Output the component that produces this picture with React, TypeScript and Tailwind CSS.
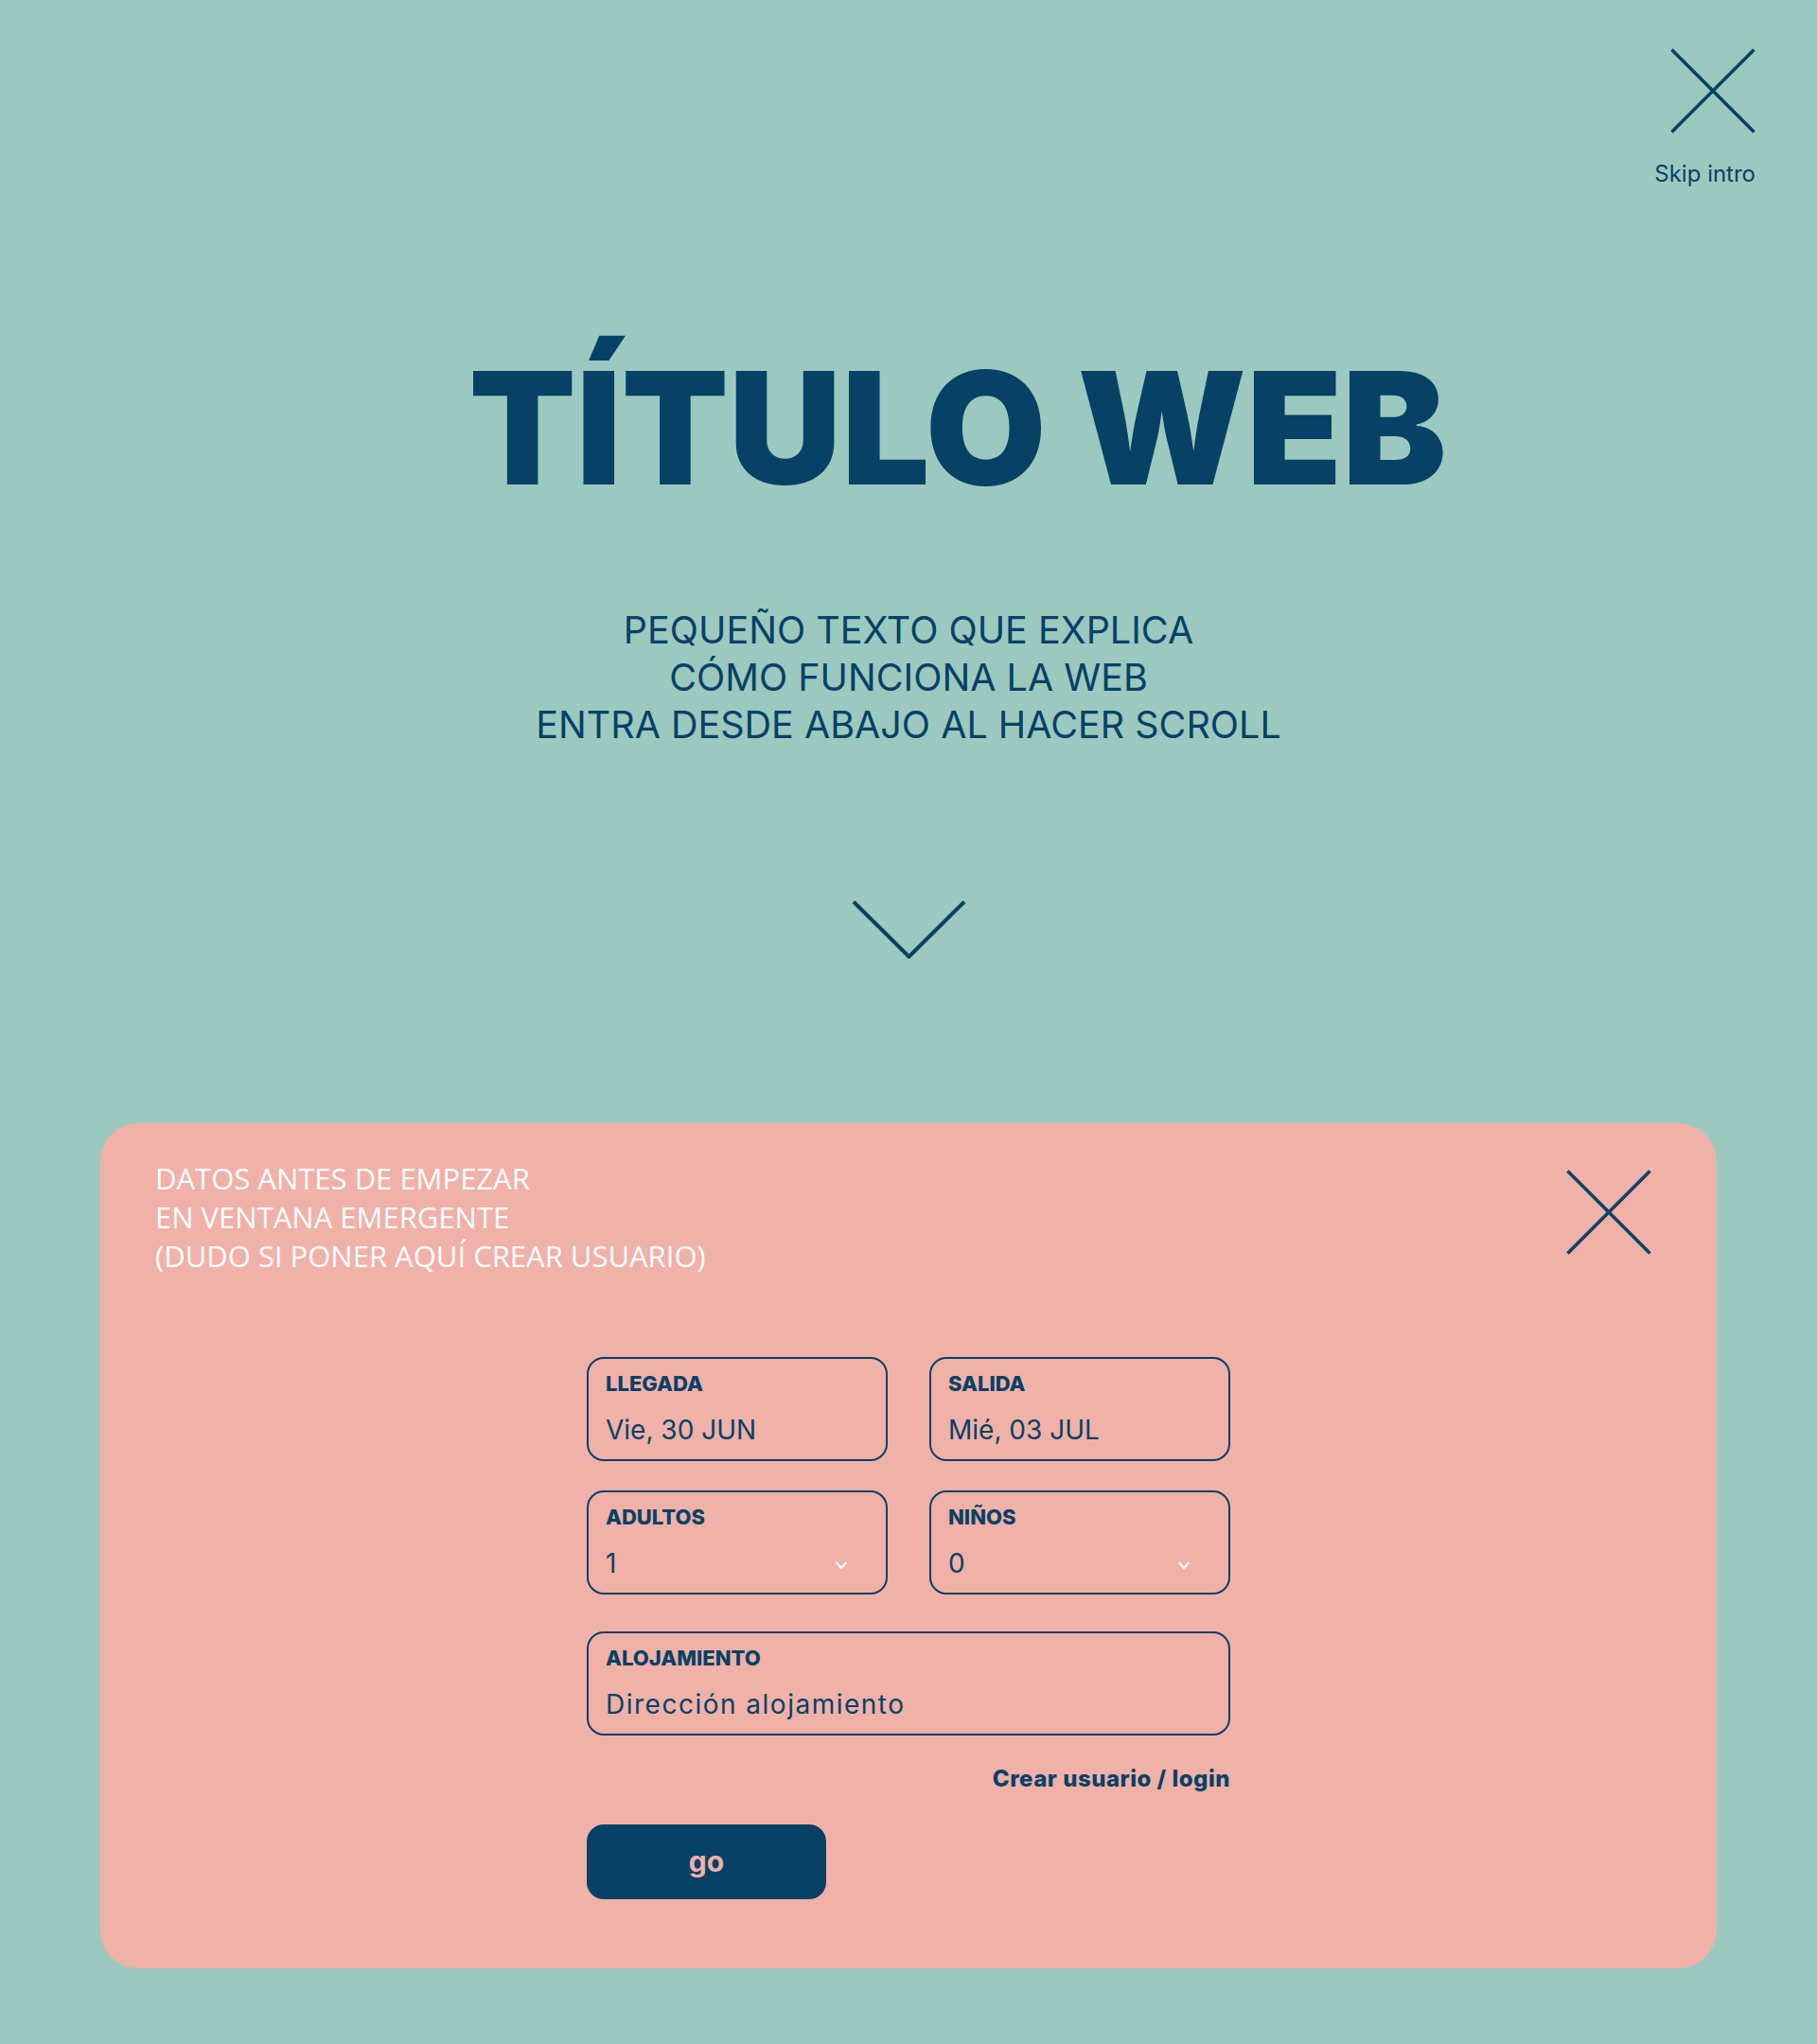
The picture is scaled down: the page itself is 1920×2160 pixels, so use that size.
import { useState } from "react";

function CloseIcon() {
  return (
    <svg width="90" height="90" viewBox="0 0 90 90" className="block">
      <line x1="1.5" y1="1.5" x2="88.5" y2="88.5" stroke="#074166" strokeWidth="3.5" />
      <line x1="88.5" y1="1.5" x2="1.5" y2="88.5" stroke="#074166" strokeWidth="3.5" />
    </svg>
  );
}

function Field({
  label,
  value,
  select,
  wide,
}: {
  label: string;
  value: string;
  select?: boolean;
  wide?: boolean;
}) {
  return (
    <div className="h-[110px] rounded-[18px] border-2 border-[#074166] pl-[18px] pr-[40px] pt-[13px]">
      <div className="text-[22px] leading-[26px] font-extrabold">{label}</div>
      <div className="mt-[19px] flex items-center justify-between">
        <span className={wide ? "text-[28px] leading-[34px] tracking-[1.5px]" : "text-[28px] leading-[34px]"}>
          {value}
        </span>
        {select && (
          <svg width="14" height="10" viewBox="0 0 14 10" className="mt-[4px]">
            <path d="M1.5 2 L7 8 L12.5 2" fill="none" stroke="#ffffff" strokeWidth="2" />
          </svg>
        )}
      </div>
    </div>
  );
}

export default function App() {
  const [open, setOpen] = useState(true);

  return (
    <div className="min-h-[2160px] bg-[#9BC9BF] text-[#074166] font-['Inter',sans-serif]">
      {/* cabecera */}
      <div className="flex justify-end pr-[65px] pt-[51px]">
        <div className="flex flex-col items-end">
          <CloseIcon />
          <span className="mt-[29px] text-[24px] leading-[28px]">Skip intro</span>
        </div>
      </div>

      <h1 className="mt-[172px] pl-[104px] text-center text-[165px] leading-none font-black">
        TÍTULO WEB
      </h1>

      <p className="mt-[106px] text-center text-[39.5px] leading-[50px]">
        PEQUEÑO TEXTO QUE EXPLICA
        <br />
        CÓMO FUNCIONA LA WEB
        <br />
        ENTRA DESDE ABAJO AL HACER SCROLL
      </p>

      <div className="mt-[160px] flex justify-center">
        <svg width="121" height="62" viewBox="0 0 121 62">
          <path d="M2 2 L60.5 60 L119 2" fill="none" stroke="#074166" strokeWidth="4" />
        </svg>
      </div>

      {/* ventana emergente */}
      <div className="pb-[79px]">
        {open && (
          <div className="mx-[106px] mt-[174px] rounded-[40px] bg-[#F0B1A8] pb-[73px] pt-[38px]">
            <div className="flex items-start justify-between pl-[58px] pr-[69px]">
              <p className="font-['Open_Sans',sans-serif] text-[31px] leading-[41px] text-white">
                DATOS ANTES DE EMPEZAR
                <br />
                EN VENTANA EMERGENTE
                <br />
                (DUDO SI PONER AQUÍ CREAR USUARIO)
              </p>
              <button className="mt-[11px]" onClick={() => setOpen(false)}>
                <CloseIcon />
              </button>
            </div>

            <div className="mx-auto mt-[86px] w-[680px]">
              <div className="grid grid-cols-2 gap-x-[44px] gap-y-[31px]">
                <Field label="LLEGADA" value="Vie, 30 JUN" />
                <Field label="SALIDA" value="Mié, 03 JUL" />
                <Field label="ADULTOS" value="1" select />
                <Field label="NIÑOS" value="0" select />
              </div>
              <div className="mt-[39px]">
                <Field label="ALOJAMIENTO" value="Dirección alojamiento" wide />
              </div>
              <div className="mt-[32px] text-right text-[24px] leading-[28px] font-extrabold tracking-[0.5px]">
                Crear usuario / login
              </div>
              <button className="mt-[34px] h-[79px] w-[253px] rounded-[18px] bg-[#074166] text-[30px] font-bold text-[#F0B1A8]">
                go
              </button>
            </div>
          </div>
        )}
      </div>
    </div>
  );
}
